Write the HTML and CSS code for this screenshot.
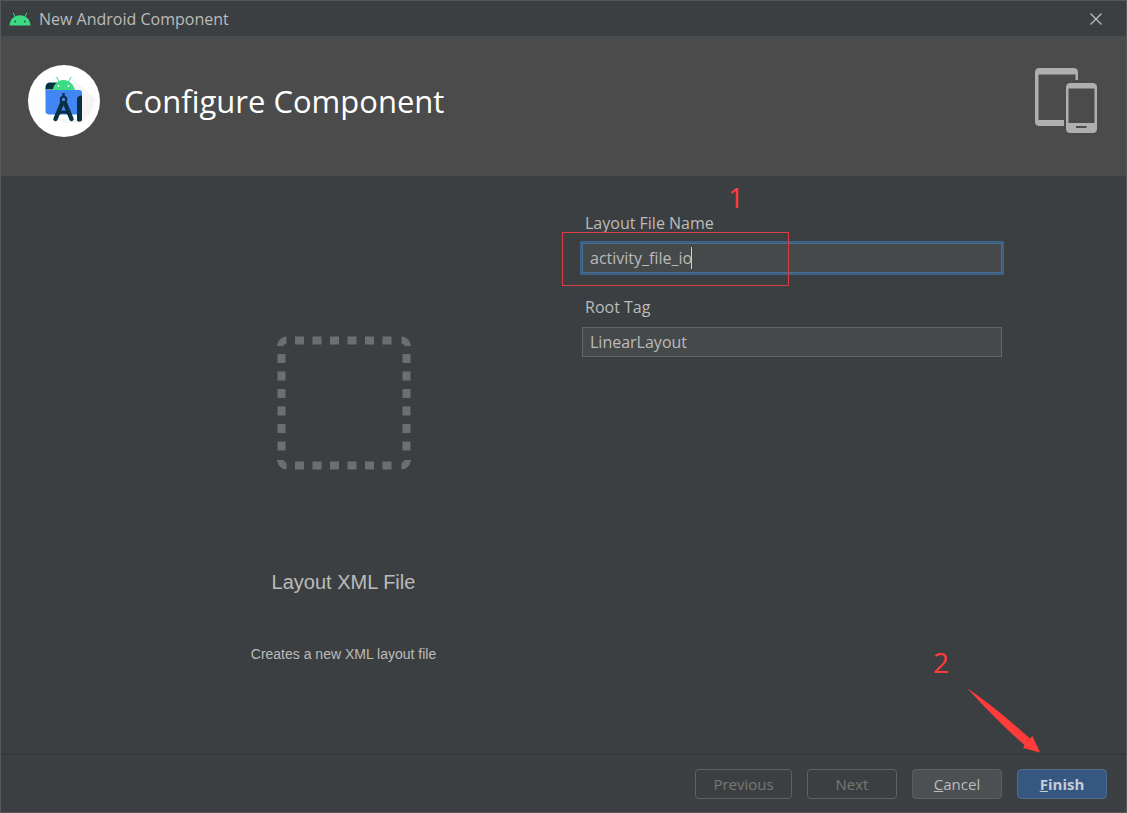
FILE: index.html
```html
<!DOCTYPE html>
<html lang="en">
<head>
<meta charset="utf-8">
<title>New Android Component</title>
<link rel="stylesheet" href="styles.css">
</head>
<body>
<div class="window">
  <header class="titlebar">
    <svg class="titlebar-logo" width="22" height="14" viewBox="0 0 22 14" aria-hidden="true">
      <path d="M4.2 1 6.2 4.6M17.8 1l-2 3.6" stroke="#3ddc84" stroke-width="1" stroke-linecap="round"/>
      <path d="M.5 13.5C1 7.500 5 3.300 11 3.300s10 4.200 10.500 10.200z" fill="#3ddc84"/>
      <circle cx="6.200" cy="9.500" r=".9" fill="#33503f"/><circle cx="15.800" cy="9.500" r=".9" fill="#33503f"/>
    </svg>
    <span class="titlebar-text">New Android Component</span>
    <button class="close" type="button" aria-label="Close">
      <svg width="14" height="14" viewBox="0 0 14 14"><path d="M1.500 1.500l11 11M12.500 1.500l-11 11" stroke="#bbb" stroke-width="1.300"/></svg>
    </button>
  </header>

  <section class="banner">
    <svg class="studio-logo" width="72" height="72" viewBox="0 0 72 72" aria-hidden="true">
      <circle cx="36" cy="36" r="36" fill="#fff"/>
      <path d="M45 14 67 34Q66 48 54 58L40 58 24 54 50 54z" fill="#f5f5f5"/>
      <path d="M22 17.500h7v7H17.500V22c0-3 2-4.500 4.500-4.500z" fill="#073042"/>
      <path d="M28.500 12l2.500 5M43 12l-2.500 5" stroke="#3ddc84" stroke-width="1"/>
      <path d="M24.500 27c0-7 5-12 11-12S47 20 47 27z" fill="#3ddc84"/>
      <circle cx="30.500" cy="21" r=".9" fill="#fff"/><circle cx="40.500" cy="21" r=".9" fill="#fff"/>
      <path d="M17.500 22c0 1.500 1 3 3 3H51c2 0 3 1 3 3v18c0 2-1.500 3.500-3.500 3.500H21c-2 0-3.500-1.500-3.500-3.500z" fill="#4285f4"/>
      <path d="M49 34c0-2 2-3.500 5-3.500v24c0 1-.7 2-2 2h-1.500c-1 0-1.500-.7-1.500-1.500z" fill="#073042"/>
      <path d="M34.500 37 27.500 54M36.500 37l7 17" stroke="#073042" stroke-width="4.400" stroke-linecap="round"/>
      <path d="M30 48.500q5.500-3 11 0" stroke="#073042" stroke-width="3" fill="none"/>
      <path d="M35.500 28v4" stroke="#073042" stroke-width="2.400"/>
      <circle cx="35.500" cy="34.500" r="2.800" fill="#4285f4" stroke="#073042" stroke-width="2"/>
    </svg>
    <h1 class="banner-title">Configure Component</h1>
    <svg class="devices" width="62" height="66" viewBox="0 0 62 66" aria-hidden="true">
      <path fill="#afafaf" fill-rule="evenodd" d="M4.500 0h34Q43 0 43 4.500V12h-2.500V6.500h-37V52H29v6H4.500Q0 58 0 53.500v-49Q0 0 4.500 0z"/>
      <path fill="#afafaf" fill-rule="evenodd" d="M35.500 15h22q4.500 0 4.500 4.500v41q0 4.500-4.500 4.500h-22q-4.500 0-4.500-4.500v-41q0-4.500 4.500-4.500zM33.500 20.500V55h26V20.500zM41 58v2h10.500v-2z"/>
    </svg>
  </section>

  <main class="content">
    <section class="preview">
      <svg class="placeholder" width="134" height="134" viewBox="0 0 134 134" fill="#6e6e6e" aria-hidden="true">
        <path d="M0 10C1 4 4 1 9.500.5v6.500L6 10zM134 10c-1-6-4-9-9.500-9.500v6.500l3.500 3zM0 124c1 6 4 9 9.500 9.500v-6.500L6 124zM134 124c-1 6-4 9-9.500 9.500v-6.500l3.500-3z"/>
        <path d="M18 4.500H115M18 129.500H115" stroke="#6e6e6e" stroke-width="8" stroke-dasharray="9 8.500"/>
        <path d="M4.500 18V115M129.500 18V115" stroke="#6e6e6e" stroke-width="8" stroke-dasharray="9 8.500"/>
      </svg>
      <h2 class="preview-title">Layout XML File</h2>
      <p class="preview-text">Creates a new XML layout file</p>
    </section>

    <form class="form" id="component">
      <label class="label" for="layout-name">Layout File Name</label>
      <div class="field">
        <input class="input input-active" id="layout-name" type="text" value="activity_file_io">
        <span class="caret"></span>
        <span class="mark-box"></span>
        <span class="mark mark-one">1</span>
      </div>
      <label class="label" for="root-tag">Root Tag</label>
      <div class="field">
        <input class="input" id="root-tag" type="text" value="LinearLayout">
      </div>
    </form>
  </main>

  <footer class="actions">
    <button class="button button-wide" type="button" disabled>Previous</button>
    <button class="button" type="button" disabled>Next</button>
    <button class="button button-normal" type="button"><u>C</u>ancel</button>
    <button class="button button-primary" type="submit" form="component"><u>F</u>inish</button>
    <span class="mark mark-two">2</span>
    <svg class="arrow" width="76" height="66" viewBox="0 0 76 66" aria-hidden="true">
      <path d="M0 0Q28 19 63 50.500L65.500 48 73 64.500 56 60 57.500 57Q33 36 0 0z" fill="#ff3b3b"/>
    </svg>
  </footer>
</div>
</body>
</html>
```
FILE: styles.css
```css
* {
  box-sizing: border-box;
}

body {
  margin: 0;
  background: #3c3f41;
  color: #bbb;
  font: 16px/20px "Open Sans", "Noto Sans", sans-serif;
}

.window {
  display: flex;
  flex-direction: column;
  min-height: 100vh;
  border: 1px solid #555759;
}

.titlebar {
  display: flex;
  align-items: center;
  gap: 8px;
  height: 35px;
  padding: 0 19px 0 8px;
}

.titlebar-text {
  flex: 1;
}

.close {
  display: flex;
  padding: 4px;
  border: 0;
  background: none;
}

.banner {
  display: flex;
  align-items: flex-start;
  height: 140px;
  padding: 29px 29px 0 27px;
  background: #4b4b4b;
}

.banner-title {
  flex: 1;
  margin: 0 0 0 24px;
  color: #fff;
  font-size: 31px;
  font-weight: 400;
  line-height: 72px;
}

.devices {
  margin-top: 3px;
}

.content {
  display: grid;
  flex: 1;
  grid-template-columns: 1fr 420px;
  padding-right: 124px;
}

.preview {
  display: flex;
  flex-direction: column;
  align-items: center;
  padding: 160px 0 0 104px;
  font-family: "Liberation Sans", Arial, sans-serif;
}

.preview-title {
  margin: 100px 0 0;
  font-size: 20px;
  font-weight: 400;
  line-height: 24px;
}

.preview-text {
  margin: 52px 0 0;
  font-size: 14px;
  line-height: 16px;
}

.form {
  display: flex;
  flex-direction: column;
  align-items: stretch;
  padding-top: 37px;
}

.label {
  padding-left: 3px;
  line-height: 20px;
}

.field {
  position: relative;
  margin: 10px 0 24px;
}

.input {
  display: block;
  width: 100%;
  height: 30px;
  padding: 0 7px;
  border: 1px solid #646464;
  border-radius: 0;
  background: #45494a;
  color: #bbb;
  font: inherit;
  outline: 0;
}

.input-active {
  border-color: #466d94;
  box-shadow: 0 0 0 2px #3d6185;
}

.caret {
  position: absolute;
  top: 4px;
  left: 109px;
  width: 1px;
  height: 22px;
  background: #ccc;
}

.mark-box {
  position: absolute;
  top: -11px;
  left: -20px;
  width: 227px;
  height: 54px;
  border: 1px solid #dc3c46;
  pointer-events: none;
}

.mark {
  position: absolute;
  color: #ff3b3b;
  font-size: 28px;
  line-height: 32px;
}

.mark-one {
  top: -62px;
  left: 146px;
}

.actions {
  position: relative;
  display: flex;
  justify-content: flex-end;
  gap: 15px;
  padding: 14px 19px 13px;
  border-top: 1px solid #323435;
}

.button {
  width: 90px;
  height: 30px;
  padding: 0;
  border: 1px solid #5e6060;
  border-radius: 4px;
  background: #3c3f41;
  color: #777;
  font: inherit;
  font-size: 15px;
}

.button-wide {
  width: 97px;
}

.button-normal {
  background: #4c5052;
  color: #bbb;
}

.button-primary {
  border-color: #4c708c;
  background: #365880;
  color: #c4cdd6;
  font-weight: 700;
}

.mark-two {
  top: -109px;
  right: 177px;
}

.arrow {
  position: absolute;
  top: -67px;
  right: 83px;
}
```
